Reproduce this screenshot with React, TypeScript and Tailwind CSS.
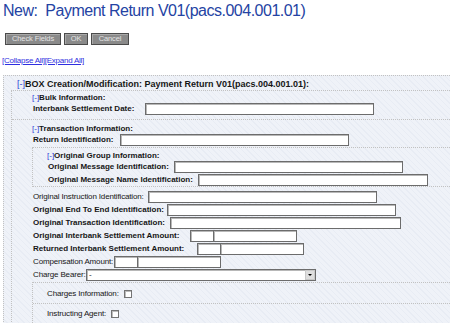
import React, { ReactNode } from "react";

const dots = "border-dotted border-[#c2c2c2]";
const inputCls =
  "h-[12px] shrink-0 border border-[#6c6c6c] bg-white shadow-[inset_1px_1px_0_#b8b8b8] outline-none";

const Toggle = () => <span className="font-normal text-[#2b3fd6]">[-]</span>;

const Btn = ({ w, children }: { w: string; children: ReactNode }) => (
  <button
    type="button"
    className={`${w} h-[12px] border border-[#4b4b4b] bg-[#8a8a8a] text-[7.5px] leading-[10px] tracking-[-0.1px] text-[#e4e4e4] shadow-[inset_1px_1px_0_#a9a9a9]`}
  >
    {children}
  </button>
);

type RowProps = {
  label: string;
  labelW: string;
  bold?: boolean;
  children: ReactNode;
};

const Row = ({ label, labelW, bold = true, children }: RowProps) => (
  <div className="flex h-[13px] items-center">
    <span
      className={`${labelW} ml-[1px] shrink-0 whitespace-nowrap ${
        bold ? "font-bold" : "tracking-[-0.15px]"
      }`}
    >
      {label}
    </span>
    {children}
  </div>
);

const Text = ({ w = "w-[229px]" }: { w?: string }) => (
  <input type="text" className={`${inputCls} ${w}`} />
);

const Amount = () => (
  <div className="flex">
    <input type="text" className={`${inputCls} w-[24px]`} />
    <input type="text" className={`${inputCls} -ml-px w-[84px]`} />
  </div>
);

const Check = () => (
  <span className="block h-[8px] w-[8px] border border-[#747474] bg-white shadow-[inset_1px_1px_0_#bcbcbc]" />
);

export default function App() {
  return (
    <div className="flex h-[323px] w-[450px] flex-col overflow-hidden bg-white font-['Liberation_Sans',Arial,sans-serif] text-[8px] leading-[9px] text-[#161616]">
      <h1 className="pl-[3px] pt-[2px] text-[16px] font-normal leading-[18px] tracking-[-0.5px] text-[#2443a3]">
        New:&nbsp; Payment Return V01(pacs.004.001.01)
      </h1>

      <div className="mt-[13px] flex gap-[3px] pl-[5px]">
        <Btn w="w-[56px]">Check Fields</Btn>
        <Btn w="w-[24px]">OK</Btn>
        <Btn w="w-[38px]">Cancel</Btn>
      </div>

      <div className="mt-[11px] pl-[2px] leading-[10px] tracking-[-0.25px]">
        <a href="#" className="text-[#2f2fe0] underline">
          [Collapse All]
        </a>
        <a href="#" className="text-[#2f2fe0] underline">
          [Expand All]
        </a>
      </div>

      <div
        className={`mt-[9px] ml-[3px] flex-1 border-t border-l ${dots} bg-[repeating-linear-gradient(45deg,#eff2f8_0px,#eff2f8_3px,#e8ecf4_3px,#e8ecf4_4px)]`}
      >
        <div className="h-[14px] pl-[13px] pt-[3px] text-[9px] font-bold leading-[11px]">
          <Toggle />
          BOX Creation/Modification: Payment Return V01(pacs.004.001.01):
        </div>

        <div className={`ml-[7px] h-[240px] border-t border-l ${dots}`}>
          {/* Bulk Information */}
          <div className="pl-[20px] pt-[2px] pb-[4px]">
            <div className="font-bold">
              <Toggle />
              Bulk Information:
            </div>
            <Row label="Interbank Settlement Date:" labelW="w-[112px]">
              <Text />
            </Row>
          </div>

          {/* Transaction Information */}
          <div className={`border-t ${dots} pl-[20px] pt-[4px]`}>
            <div className="font-bold">
              <Toggle />
              Transaction Information:
            </div>
            <Row label="Return Identification:" labelW="w-[87px]">
              <Text />
            </Row>

            <div className={`mt-[1px] border-t border-b border-l ${dots} pl-[14px] pt-[3px]`}>
              <div className="font-bold">
                <Toggle />
                Original Group Information:
              </div>
              <Row label="Original Message Identification:" labelW="w-[126px]">
                <Text />
              </Row>
              <Row label="Original Message Name Identification:" labelW="w-[150px]">
                <Text w="w-[230px]" />
              </Row>
            </div>

            <div className="mt-[3px]">
              <Row label="Original Instruction Identification:" labelW="w-[115px]" bold={false}>
                <Text />
              </Row>
              <Row label="Original End To End Identification:" labelW="w-[134px]">
                <Text />
              </Row>
              <Row label="Original Transaction Identification:" labelW="w-[137px]">
                <Text w="w-[231px]" />
              </Row>
              <Row label="Original Interbank Settlement Amount:" labelW="w-[157px]">
                <Amount />
              </Row>
              <Row label="Returned Interbank Settlement Amount:" labelW="w-[164px]">
                <Amount />
              </Row>
              <Row label="Compensation Amount:" labelW="w-[81px]" bold={false}>
                <Amount />
              </Row>
              <Row label="Charge Bearer:" labelW="w-[53px]" bold={false}>
                <div className={`${inputCls} flex w-[230px] items-center`}>
                  <span className="flex-1 pl-[2px]">-</span>
                  <span className="flex h-[10px] w-[10px] items-center justify-center border border-[#c9c9c9] bg-[#dedede]">
                    <span className="h-0 w-0 border-x-[2px] border-t-[2px] border-x-transparent border-t-black" />
                  </span>
                </div>
              </Row>
            </div>

            <div className={`mt-[1px] border-t border-l ${dots}`}>
              <div className="flex h-[20px] items-center gap-[5px] pl-[14px] pt-[1px] tracking-[-0.15px]">
                <span>Charges Information:</span>
                <Check />
              </div>
              <div className={`flex h-[20px] items-center gap-[5px] border-t ${dots} pl-[14px] tracking-[-0.15px]`}>
                <span>Instructing Agent:</span>
                <Check />
              </div>
            </div>
          </div>
        </div>
      </div>
    </div>
  );
}
